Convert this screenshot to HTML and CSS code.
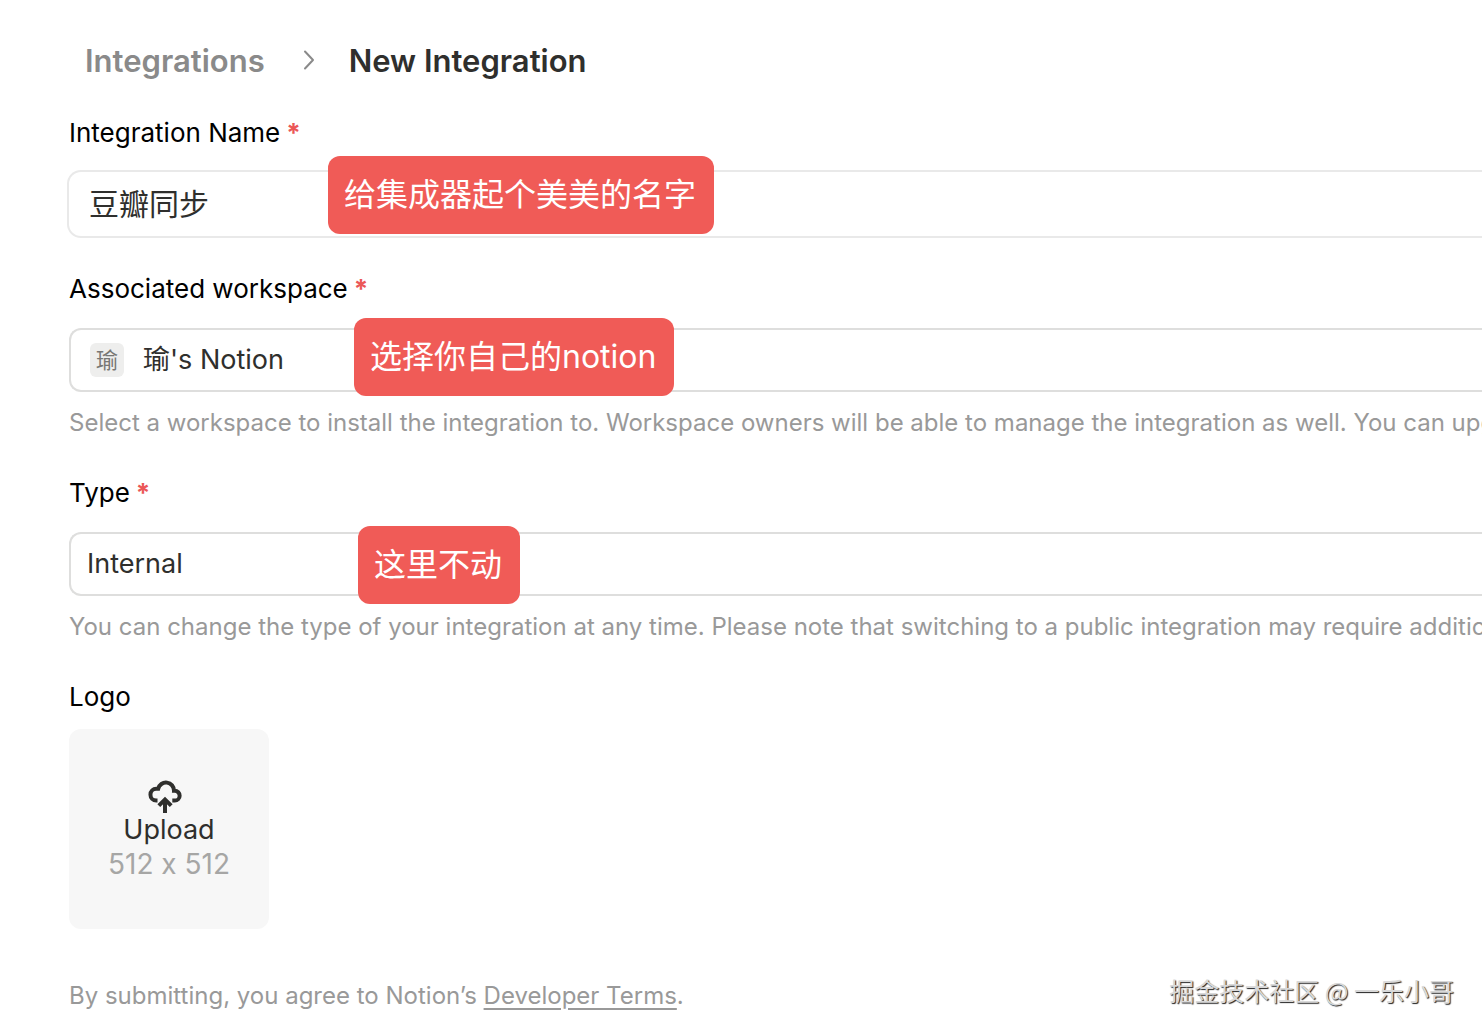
FILE: index.html
```html
<!DOCTYPE html>
<html lang="en">
<head>
<meta charset="utf-8">
<title>New Integration</title>
<meta name="viewport" content="width=device-width, initial-scale=1">
<link rel="stylesheet" href="styles.css">
</head>
<body>
<main class="page">
  <nav class="breadcrumb" aria-label="Breadcrumb">
    <a class="breadcrumb-link" href="#">Integrations</a>
    <svg class="breadcrumb-chevron" viewBox="0 0 12 20" aria-hidden="true"><path d="M2 1.500 10 10 2 18.500"/></svg>
    <h1 class="breadcrumb-current">New Integration</h1>
  </nav>

  <form class="form">
    <div class="group">
      <label class="label" for="name">Integration Name<span class="required">*</span></label>
      <div class="field field-ring">
        <input class="control control-name" id="name" type="text" value="豆瓣同步">
        <span class="note note-name">给集成器起个美美的名字</span>
      </div>
    </div>

    <div class="group">
      <label class="label" for="workspace">Associated workspace<span class="required">*</span></label>
      <div class="field">
        <span class="avatar" aria-hidden="true">瑜</span>
        <select class="control" id="workspace"><option>瑜's Notion</option></select>
        <span class="note note-workspace">选择你自己的notion</span>
      </div>
      <p class="help">Select a workspace to install the integration to. Workspace owners will be able to manage the integration as well. You can upg</p>
    </div>

    <div class="group">
      <label class="label" for="type">Type<span class="required">*</span></label>
      <div class="field">
        <select class="control" id="type"><option>Internal</option></select>
        <span class="note note-type">这里不动</span>
      </div>
      <p class="help">You can change the type of your integration at any time. Please note that switching to a public integration may require additio</p>
    </div>

    <div class="group">
      <span class="label" id="logo-label">Logo</span>
      <button class="upload" type="button" aria-describedby="logo-label">
        <svg class="upload-icon" viewBox="0 0 34 34" aria-hidden="true">
          <path d="M9.500 21.500H8.300A5.700 5.700 0 0 1 8.300 9.800H10.200A8 8 0 0 1 26 11.800H26.800A4.800 4.800 0 0 1 26.800 21.500H24.300"/>
          <path d="M17 34V20M10.800 26.700 17 20.500 23.200 26.700"/>
        </svg>
        <span class="upload-title">Upload</span>
        <span class="upload-size">512 x 512</span>
      </button>
    </div>
  </form>

  <footer class="footer">
    <p class="help">By submitting, you agree to Notion’s <a class="terms" href="#">Developer Terms</a>.</p>
    <span class="credit">掘金技术社区 @ 一乐小哥</span>
  </footer>
</main>
</body>
</html>
```

FILE: styles.css
```css
* {
  box-sizing: border-box;
}

body {
  margin: 0;
  background: #fff;
  color: #2f2f2d;
  font-family: Inter, "Noto Sans CJK SC", sans-serif;
  font-size: 26px;
  font-variant-ligatures: no-contextual;
  line-height: 36px;
}

.page {
  padding: 41px 0 18px 69px;
  overflow: hidden;
}

.breadcrumb {
  display: flex;
  align-items: center;
  padding-left: 16px;
  margin-bottom: 34px;
  font-size: 31px;
  font-weight: 600;
  line-height: 40px;
}

.breadcrumb-link {
  color: #8a8a8a;
  text-decoration: none;
}

.breadcrumb-chevron {
  width: 12px;
  height: 20px;
  margin: 0 34px 2px 38px;
  fill: none;
  stroke: #8a8a8a;
  stroke-width: 2;
  stroke-linecap: round;
  stroke-linejoin: round;
}

.breadcrumb-current {
  margin: 0;
  font-size: inherit;
  font-weight: inherit;
}

.form {
  display: flex;
  flex-direction: column;
  gap: 34px;
}

.label {
  display: block;
  color: #000;
}

.required {
  margin-left: 6px;
  color: #eb5757;
  font-weight: 700;
}

.field {
  position: relative;
  display: flex;
  align-items: center;
  height: 64px;
  margin-top: 21px;
  padding-left: 16px;
  border: 2px solid #dededd;
  border-right: 0;
  border-radius: 12px 0 0 12px;
}

.field-ring {
  margin-bottom: 1px;
  padding-left: 20px;
  border: 0;
  box-shadow: 0 0 0 2px #e9e9e9;
}

.control {
  flex: 1;
  min-width: 0;
  height: 100%;
  padding: 0;
  border: 0;
  outline: 0;
  background: none;
  color: inherit;
  font: inherit;
  font-size: 27px;
  appearance: none;
}

.control-name {
  padding-bottom: 4px;
  font-size: 30px;
}

.avatar {
  width: 34px;
  height: 34px;
  margin: 0 19px 0 3px;
  border-radius: 6px;
  background: #eeeeed;
  color: #777774;
  font-size: 22px;
  line-height: 34px;
  text-align: center;
}

.note {
  position: absolute;
  padding: 16px 18px 16px 16px;
  border-radius: 12px;
  background: #f05b57;
  color: #fff;
  font-size: 32px;
  line-height: 46px;
  white-space: nowrap;
}

.note-name {
  top: -16px;
  left: 259px;
}

.note-workspace {
  top: -12px;
  left: 283px;
}

.note-type {
  top: -8px;
  left: 287px;
}

.help {
  margin: 13px 0 0;
  color: #999;
  font-size: 24px;
  white-space: nowrap;
}

.upload {
  display: flex;
  flex-direction: column;
  align-items: center;
  width: 200px;
  height: 200px;
  margin-top: 14px;
  padding: 50px 0 0;
  border: 0;
  border-radius: 12px;
  background: #f7f7f7;
  color: inherit;
  font: inherit;
  font-size: 27px;
  line-height: 34px;
}

.upload-icon {
  width: 34px;
  height: 34px;
  margin-right: 8px;
  fill: none;
  stroke: currentColor;
  stroke-width: 4;
}

.upload-size {
  color: #a6a6a5;
  font-size: 28px;
}

.footer {
  display: flex;
  justify-content: space-between;
  align-items: center;
  margin-top: 36px;
  padding-right: 28px;
}

.terms {
  color: inherit;
  text-decoration-thickness: 2px;
  text-underline-offset: 4px;
}

.credit {
  color: #d8d8d8;
  font-family: "Noto Sans CJK SC", sans-serif;
  font-size: 25px;
  text-shadow: 1px 1px 1px #222;
}
```
